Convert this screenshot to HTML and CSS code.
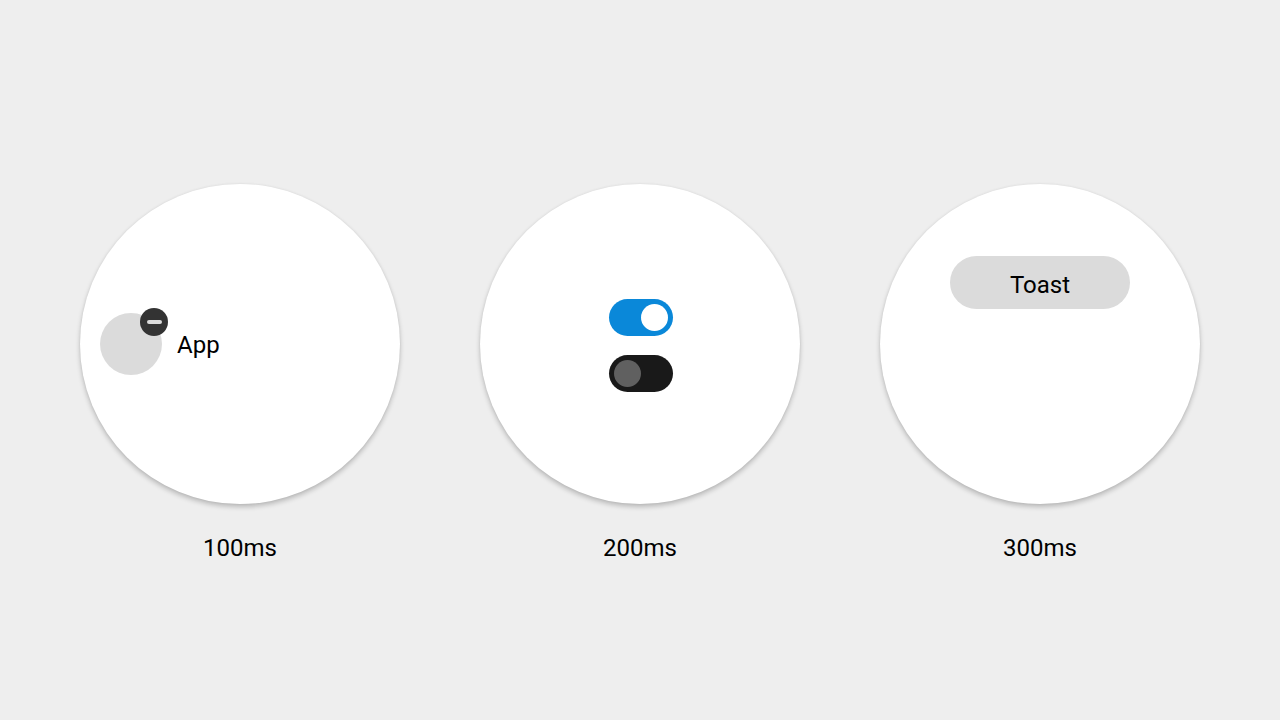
FILE: index.html
```html
<!DOCTYPE html>
<html lang="en">
<head>
<meta charset="utf-8">
<meta name="viewport" content="width=device-width, initial-scale=1">
<title>Durations</title>
<link rel="stylesheet" href="styles.css">
</head>
<body>
<main class="board">
  <figure class="sample">
    <div class="watch watch-app">
      <div class="app-icon">
        <button class="remove" type="button" aria-label="Remove app"><span class="minus"></span></button>
      </div>
      <span class="app-name">App</span>
    </div>
    <figcaption class="duration">100ms</figcaption>
  </figure>
  <figure class="sample">
    <div class="watch watch-switches">
      <input class="switch" type="checkbox" role="switch" aria-label="Switch on" checked>
      <input class="switch" type="checkbox" role="switch" aria-label="Switch off">
    </div>
    <figcaption class="duration">200ms</figcaption>
  </figure>
  <figure class="sample">
    <div class="watch watch-toast">
      <div class="toast" role="status">Toast</div>
    </div>
    <figcaption class="duration">300ms</figcaption>
  </figure>
</main>
</body>
</html>
```

FILE: styles.css
```css
* {
  box-sizing: border-box;
}

body {
  margin: 0;
  background: #eeeeee;
  color: #000000;
  font-family: Roboto, "Liberation Sans", sans-serif;
  font-size: 24px;
  line-height: 28px;
}

.board {
  display: flex;
  justify-content: center;
  align-items: center;
  gap: 80px;
  min-height: 100vh;
  padding: 24px;
}

.sample {
  flex: 0 1 320px;
  margin: 0;
  padding-top: 26px;
}

.watch {
  display: flex;
  aspect-ratio: 1;
  border-radius: 50%;
  background: #ffffff;
  box-shadow: 0 3px 5px rgba(0, 0, 0, 0.22), 0 0 3px rgba(0, 0, 0, 0.06);
}

.watch-app {
  align-items: center;
  gap: 15px;
  padding-left: 20px;
}

.app-icon {
  position: relative;
  width: 62px;
  height: 62px;
  border-radius: 50%;
  background: #dbdbdb;
}

.app-name {
  padding-top: 2px;
}

.remove {
  position: absolute;
  top: -5px;
  right: -6px;
  display: flex;
  align-items: center;
  justify-content: center;
  width: 28px;
  height: 28px;
  padding: 0;
  border: 0;
  border-radius: 50%;
  background: #333333;
}

.minus {
  width: 15px;
  height: 4px;
  border-radius: 2px;
  background: #dbdbdb;
}

.watch-switches {
  flex-direction: column;
  align-items: center;
  justify-content: center;
  gap: 19px;
  padding: 3px 0 0 2px;
}

.switch {
  display: flex;
  align-items: center;
  appearance: none;
  width: 64px;
  height: 37px;
  margin: 0;
  padding: 0 5px;
  border-radius: 19px;
  background: #191919;
}

.switch::before {
  content: "";
  width: 27px;
  height: 27px;
  border-radius: 50%;
  background: #606060;
}

.switch:checked {
  justify-content: flex-end;
  background: #0a88d9;
}

.switch:checked::before {
  background: #ffffff;
}

.watch-toast {
  align-items: flex-start;
  justify-content: center;
  padding-top: 72px;
}

.toast {
  width: 180px;
  padding: 15px 0 10px;
  border-radius: 27px;
  background: #dbdbdb;
  text-align: center;
}

.duration {
  margin-top: 30px;
  text-align: center;
}
```
